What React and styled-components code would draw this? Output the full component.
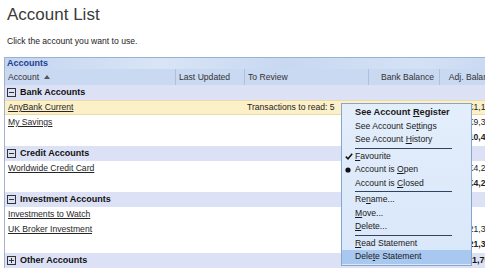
import React from "react";
import styled, { createGlobalStyle } from "styled-components";

const GlobalStyle = createGlobalStyle`
  html, body {
    margin: 0;
    padding: 0;
    background: #ffffff;
    overflow: hidden;
  }
  body {
    font-family: "Liberation Sans", Arial, sans-serif;
    color: #222;
  }
`;

const COLS = "170px 69px 124px 71px 73px";

const Page = styled.div`
  position: relative;
  width: 520px;
  padding-top: 4px;
`;

const Title = styled.h1`
  margin: 0 0 0 7px;
  font-size: 17px;
  line-height: 22px;
  font-weight: normal;
  color: #3a3a3a;
`;

const Intro = styled.p`
  margin: 9px 0 0 7px;
  font-size: 8.6px;
  line-height: 12px;
  color: #222;
`;

const Panel = styled.div`
  margin: 10px 0 0 4px;
  width: 513px;
  border-left: 1px solid #a3b3cd;
`;

const PanelTitle = styled.div`
  height: 11px;
  border-top: 1px solid #9ab1d6;
  padding-left: 2px;
  font-size: 9px;
  line-height: 11px;
  font-weight: bold;
  color: #1e3f91;
  background: linear-gradient(100deg, #c3d5f0 0%, #d9e5f6 30%, #c7d8f1 55%, #d4e2f5 80%, #c5d6f0 100%);
`;

const HeaderRow = styled.div`
  display: grid;
  grid-template-columns: ${COLS};
  height: 16px;
  background: #c9d9f1;
  font-size: 8.6px;
  line-height: 16px;
  color: #333;
`;

const HeadCell = styled.div`
  padding: 0 ${(p) => p.$pr || "0"} 0 3px;
  border-left: ${(p) => (p.$first ? "none" : "1px solid #adc1df")};
  white-space: nowrap;
  display: flex;
  align-items: center;
  justify-content: ${(p) => (p.$right ? "flex-end" : "flex-start")};
  gap: 5px;
`;

const GroupRow = styled.div`
  display: grid;
  grid-template-columns: ${COLS};
  height: 15px;
  background: #dce1f5;
  font-size: 9px;
  line-height: 15px;
  font-weight: bold;
  color: #111;
`;

const GroupLabel = styled.div`
  display: flex;
  align-items: center;
  gap: 4px;
  padding-left: 2px;
  white-space: nowrap;
`;

const DataRow = styled.div`
  display: grid;
  grid-template-columns: ${COLS};
  height: ${(p) => (p.$total ? "16px" : "15px")};
  box-sizing: border-box;
  background: ${(p) => (p.$selected ? "#fcf0c9" : "transparent")};
  border-top: 1px solid ${(p) => (p.$selected ? "#eadba8" : "transparent")};
  border-bottom: 1px solid ${(p) => (p.$selected ? "#eadba8" : "transparent")};
  font-size: 8.6px;
  line-height: ${(p) => (p.$total ? "12px" : "13px")};
  color: #222;
`;

const Cell = styled.div`
  padding: 0 ${(p) => (p.$right ? "5px" : "0")} 0 3px;
  text-align: ${(p) => (p.$right ? "right" : "left")};
  font-weight: ${(p) => (p.$bold ? "bold" : "normal")};
  white-space: nowrap;
`;

const AccountLink = styled.span`
  text-decoration: underline;
  text-underline-offset: 1px;
  color: #262626;
`;

const Menu = styled.div`
  position: absolute;
  left: 341px;
  top: 103px;
  width: 131px;
  box-sizing: border-box;
  border: 1px solid #8aa5cc;
  background: linear-gradient(180deg, #e4eefb 0%, #d8e7fa 100%);
  padding: 2px 0 1px;
  font-size: 8.6px;
  color: #1a1a1a;
`;

const MenuItem = styled.div`
  position: relative;
  height: 13.5px;
  line-height: 13.5px;
  padding-left: 13px;
  white-space: nowrap;
  background: ${(p) => (p.$active ? "#a8c8ef" : "transparent")};
  font-weight: ${(p) => (p.$bold ? "bold" : "normal")};
  font-size: ${(p) => (p.$bold ? "9.2px" : "8.6px")};
`;

const MenuMark = styled.span`
  position: absolute;
  left: 3px;
  top: 0;
  height: 13.5px;
  display: flex;
  align-items: center;
`;

const Separator = styled.div`
  height: 3px;
  display: flex;
  align-items: center;
  padding-left: 13px;

  &::after {
    content: "";
    display: block;
    width: 97px;
    height: 1px;
    background: #34415f;
  }
`;

const SortArrow = () => (
  <svg width="6" height="4" viewBox="0 0 6 4">
    <path d="M0 4 L3 0 L6 4 Z" fill="#555" />
  </svg>
);

const ToggleBox = ({ open }) => (
  <svg width="9" height="9" viewBox="0 0 9 9">
    <rect x="0.5" y="0.5" width="8" height="8" fill="none" stroke="#333" />
    <path d="M2 4.5 H7" stroke="#333" />
    {!open && <path d="M4.5 2 V7" stroke="#333" />}
  </svg>
);

const Check = () => (
  <svg width="8" height="7" viewBox="0 0 8 7">
    <path d="M0.8 3.6 L3 5.8 L7.2 0.8" fill="none" stroke="#111" strokeWidth="1.5" />
  </svg>
);

const Dot = () => (
  <svg width="6" height="6" viewBox="0 0 6 6">
    <circle cx="3" cy="3" r="2.6" fill="#111" />
  </svg>
);

const groups = [
  {
    name: "Bank Accounts",
    open: true,
    rows: [
      { name: "AnyBank Current", review: "Transactions to read: 5", adj: "£1,154.21", selected: true },
      { name: "My Savings", adj: "£9,302.87" },
    ],
    total: "£10,457.08",
  },
  {
    name: "Credit Accounts",
    open: true,
    rows: [{ name: "Worldwide Credit Card", adj: "£4,241.50" }],
    total: "£4,241.50",
  },
  {
    name: "Investment Accounts",
    open: true,
    rows: [
      { name: "Investments to Watch", adj: "" },
      { name: "UK Broker Investment", adj: "£21,340.00" },
    ],
    total: "£21,340.00",
  },
  { name: "Other Accounts", open: false, rows: [], groupTotal: "£1,705.00" },
];

const menu = [
  { label: <>See Account <u>R</u>egister</>, bold: true },
  { label: <>See Account Se<u>t</u>tings</> },
  { label: <>See Account <u>H</u>istory</> },
  "sep",
  { label: <><u>F</u>avourite</>, mark: <Check /> },
  { label: <>Account is <u>O</u>pen</>, mark: <Dot /> },
  { label: <>Account is <u>C</u>losed</> },
  "sep",
  { label: <>Re<u>n</u>ame...</> },
  { label: <><u>M</u>ove...</> },
  { label: <><u>D</u>elete...</> },
  "sep",
  { label: <><u>R</u>ead Statement</> },
  { label: <>Dele<u>t</u>e Statement</>, active: true },
];

export default function App() {
  return (
    <Page>
      <GlobalStyle />
      <Title>Account List</Title>
      <Intro>Click the account you want to use.</Intro>
      <Panel>
        <PanelTitle>Accounts</PanelTitle>
        <HeaderRow>
          <HeadCell $first>
            Account <SortArrow />
          </HeadCell>
          <HeadCell>Last Updated</HeadCell>
          <HeadCell>To Review</HeadCell>
          <HeadCell $right $pr="5px">Bank Balance</HeadCell>
          <HeadCell $right $pr="15px">Adj. Balance</HeadCell>
        </HeaderRow>
        {groups.map((g) => (
          <React.Fragment key={g.name}>
            <GroupRow>
              <GroupLabel>
                <ToggleBox open={g.open} />
                {g.name}
              </GroupLabel>
              <div />
              <div />
              <div />
              <Cell $right $bold>{g.groupTotal}</Cell>
            </GroupRow>
            {g.rows.map((r) => (
              <DataRow key={r.name} $selected={r.selected}>
                <Cell>
                  <AccountLink>{r.name}</AccountLink>
                </Cell>
                <Cell />
                <Cell>{r.review}</Cell>
                <Cell $right />
                <Cell $right>{r.adj}</Cell>
              </DataRow>
            ))}
            {g.total && (
              <DataRow $total>
                <Cell />
                <Cell />
                <Cell />
                <Cell $right />
                <Cell $right $bold>{g.total}</Cell>
              </DataRow>
            )}
          </React.Fragment>
        ))}
      </Panel>
      <Menu>
        {menu.map((m, i) =>
          m === "sep" ? (
            <Separator key={i} />
          ) : (
            <MenuItem key={i} $bold={m.bold} $active={m.active}>
              {m.mark && <MenuMark>{m.mark}</MenuMark>}
              {m.label}
            </MenuItem>
          )
        )}
      </Menu>
    </Page>
  );
}
